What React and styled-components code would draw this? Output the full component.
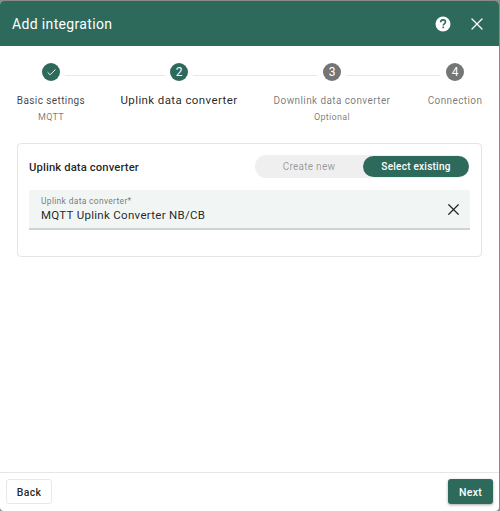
import styled, { createGlobalStyle } from 'styled-components'
import { X, Check } from 'lucide-react'

const Global = createGlobalStyle`
    html, body {
        margin: 0;
        padding: 0;
        background: #8a8a8a;
    }
    * {
        box-sizing: border-box;
    }
`

const Dialog = styled.div`
    width: 499px;
    height: 510px;
    margin-top: 1px;
    display: flex;
    flex-direction: column;
    background: #fff;
    border-radius: 4px;
    overflow: hidden;
    font-family: Roboto, sans-serif;
`

const Header = styled.header`
    height: 45px;
    flex: none;
    display: flex;
    align-items: center;
    justify-content: space-between;
    padding: 0 12px 0 12px;
    background: #2d6a5c;
    color: #fff;
`

const Title = styled.h1`
    margin: 1px 0 0;
    font-size: 14px;
    font-weight: 400;
    letter-spacing: 0.35px;
`

const HeaderIcons = styled.div`
    display: flex;
    align-items: center;
    gap: 16px;
`

const Stepper = styled.div`
    flex: none;
    height: 97px;
    padding-top: 17px;
    display: grid;
    grid-template-columns: 102px 154px 152px 94px;
`

const Step = styled.div`
    display: flex;
    flex-direction: column;
    align-items: center;
    position: relative;
`

const Bullet = styled.div`
    width: 18px;
    height: 18px;
    border-radius: 50%;
    display: flex;
    align-items: center;
    justify-content: center;
    color: #fff;
    font-size: 12px;
    background: ${(props) => (props.$active ? '#2d6a5c' : '#757575')};
`

const Connector = styled.div`
    position: absolute;
    top: 12px;
    height: 1px;
    left: calc(50% + 14px);
    width: ${(props) => props.$width}px;
    background: #e8e8e8;
`

const StepLabel = styled.div`
    margin-top: ${(props) => (props.$current ? '12px' : '13px')};
    white-space: nowrap;
    letter-spacing: 0.4px;
    line-height: 14px;
    font-size: ${(props) => (props.$current ? '11.5px' : '10px')};
    color: ${(props) => (props.$current ? 'rgba(0,0,0,.87)' : props.$active ? 'rgba(0,0,0,.76)' : 'rgba(0,0,0,.54)')};
`

const StepHint = styled.div`
    margin-top: 3px;
    font-size: 9px;
    line-height: 12px;
    letter-spacing: 0.3px;
    color: rgba(0, 0, 0, 0.54);
`

const Body = styled.main`
    flex: 1;
    padding: 0 17px;
`

const Card = styled.section`
    width: 465px;
    height: 114px;
    padding: 11px 11px 0;
    border: 1px solid #e4e4e4;
    border-radius: 4px;
`

const CardHead = styled.div`
    display: flex;
    align-items: center;
    justify-content: space-between;
    height: 23px;
    margin-bottom: 12px;
`

const CardTitle = styled.h2`
    margin: 1px 0 0;
    font-size: 11.3px;
    font-weight: 500;
    letter-spacing: 0.1px;
    color: rgba(0, 0, 0, 0.87);
`

const Toggle = styled.div`
    width: 214px;
    height: 23px;
    display: flex;
    margin-right: 1px;
    border-radius: 12px;
    background: #efefef;
    font-size: 10px;
    letter-spacing: 0.25px;
`

const ToggleOption = styled.div`
    flex: ${(props) => (props.$selected ? '0 0 106px' : '1')};
    margin: 1px 0;
    display: flex;
    align-items: center;
    justify-content: center;
    border-radius: 11px;
    background: ${(props) => (props.$selected ? '#2d6a5c' : 'transparent')};
    color: ${(props) => (props.$selected ? '#fff' : 'rgba(0,0,0,.38)')};
    font-weight: ${(props) => (props.$selected ? 500 : 400)};
`

const Field = styled.div`
    width: 441px;
    height: 40px;
    display: flex;
    align-items: center;
    justify-content: space-between;
    padding: 0 7px 0 12px;
    background: #f1f5f4;
    border-bottom: 2px solid #d2d2d2;
    border-radius: 2px 2px 0 0;
`

const FieldLabel = styled.div`
    font-size: 8.5px;
    line-height: 11px;
    letter-spacing: 0.3px;
    color: rgba(0, 0, 0, 0.54);
`

const FieldValue = styled.div`
    margin-top: 1px;
    font-size: 11.5px;
    line-height: 14px;
    letter-spacing: 0.3px;
    color: rgba(0, 0, 0, 0.87);
`

const Footer = styled.footer`
    flex: none;
    height: 39px;
    display: flex;
    align-items: flex-start;
    justify-content: space-between;
    padding: 6px 6px 0 6px;
    border-top: 1px solid #e6e6e6;
`

const Button = styled.button`
    height: 25px;
    width: ${(props) => (props.$primary ? '45px' : '46px')};
    padding: 1px 0 0;
    font-family: inherit;
    font-size: 10.5px;
    font-weight: 500;
    letter-spacing: 0.3px;
    border-radius: 3px;
    border: ${(props) => (props.$primary ? 'none' : '1px solid #e8e8e8')};
    background: ${(props) => (props.$primary ? '#2d6a5c' : '#fff')};
    color: ${(props) => (props.$primary ? '#fff' : 'rgba(0,0,0,.87)')};
    box-shadow: ${(props) => (props.$primary ? '0 1px 3px rgba(0,0,0,.35)' : 'none')};
`

const HelpIcon = () => (
    <svg width="16" height="16" viewBox="0 0 16 16">
        <circle cx="8" cy="8" r="7.5" fill="#fff" />
        <path d="M5.6 6.2c.1-1.5 1.1-2.3 2.5-2.3s2.4.9 2.4 2.1c0 1.9-2.3 1.9-2.3 3.6" fill="none" stroke="#2d6a5c" strokeWidth="1.6" />
        <rect x="7.4" y="10.6" width="1.6" height="1.6" fill="#2d6a5c" />
    </svg>
)

const steps = [
    { n: 1, label: 'Basic settings', hint: 'MQTT', line: 100, done: true },
    { n: 2, label: 'Uplink data converter', line: 124, active: true, current: true },
    { n: 3, label: 'Downlink data converter', hint: 'Optional', line: 94 },
    { n: 4, label: 'Connection' },
]

export default function App() {
    return (
        <>
            <Global />
            <Dialog>
                <Header>
                    <Title>Add integration</Title>
                    <HeaderIcons>
                        <HelpIcon />
                        <X size={20} strokeWidth={1.5} />
                    </HeaderIcons>
                </Header>
                <Stepper>
                    {steps.map((s) => (
                        <Step key={s.n}>
                            <Bullet $active={s.done || s.active}>
                                {s.done ? <Check size={11} strokeWidth={2} /> : s.n}
                            </Bullet>
                            {s.line && <Connector $width={s.line} />}
                            <StepLabel $active={s.done} $current={s.current}>{s.label}</StepLabel>
                            {s.hint && <StepHint>{s.hint}</StepHint>}
                        </Step>
                    ))}
                </Stepper>
                <Body>
                    <Card>
                        <CardHead>
                            <CardTitle>Uplink data converter</CardTitle>
                            <Toggle>
                                <ToggleOption>Create new</ToggleOption>
                                <ToggleOption $selected>Select existing</ToggleOption>
                            </Toggle>
                        </CardHead>
                        <Field>
                            <div>
                                <FieldLabel>Uplink data converter*</FieldLabel>
                                <FieldValue>MQTT Uplink Converter NB/CB</FieldValue>
                            </div>
                            <X size={19} strokeWidth={1.5} color="#222" />
                        </Field>
                    </Card>
                </Body>
                <Footer>
                    <Button>Back</Button>
                    <Button $primary>Next</Button>
                </Footer>
            </Dialog>
        </>
    )
}
